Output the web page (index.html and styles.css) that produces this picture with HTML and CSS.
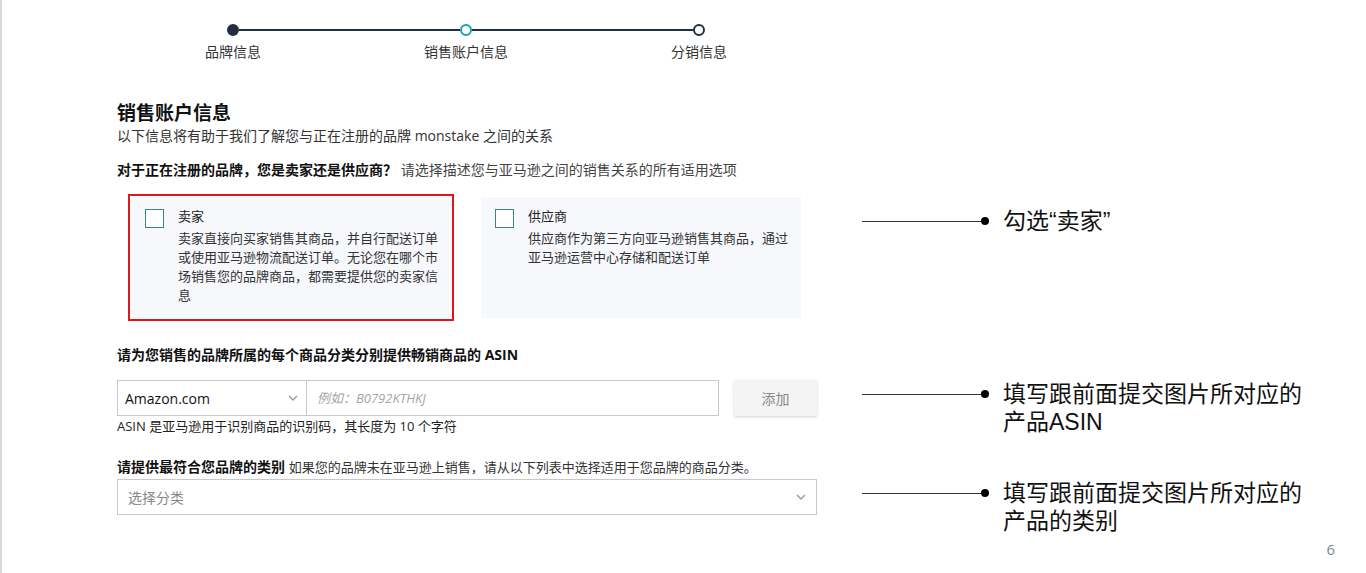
FILE: index.html
```html
<!DOCTYPE html>
<html lang="zh-CN">
<head>
    <meta charset="UTF-8">
    <meta name="viewport" content="width=device-width, initial-scale=1.0">
    <title>销售账户信息</title>
    <link rel="stylesheet" href="styles.css">
</head>
<body>
    <div class="page">
        <div class="steps">
            <span class="dot done"></span>
            <span class="track"></span>
            <span class="dot current"></span>
            <span class="track"></span>
            <span class="dot"></span>
            <span class="step-label">品牌信息</span>
            <span class="step-label col-3">销售账户信息</span>
            <span class="step-label col-5">分销信息</span>
        </div>

        <h1>销售账户信息</h1>
        <p class="intro">以下信息将有助于我们了解您与正在注册的品牌 monstake 之间的关系</p>
        <p class="question"><b>对于正在注册的品牌，您是卖家还是供应商？</b> 请选择描述您与亚马逊之间的销售关系的所有适用选项</p>

        <div class="row cards-row">
            <div class="field cards">
                <div class="card selected">
                    <span class="checkbox"></span>
                    <div class="card-body">
                        <div class="card-title">卖家</div>
                        <div>卖家直接向买家销售其商品，并自行配送订单或使用亚马逊物流配送订单。无论您在哪个市场销售您的品牌商品，都需要提供您的卖家信息</div>
                    </div>
                </div>
                <div class="card">
                    <span class="checkbox"></span>
                    <div class="card-body">
                        <div class="card-title">供应商</div>
                        <div>供应商作为第三方向亚马逊销售其商品，通过亚马逊运营中心存储和配送订单</div>
                    </div>
                </div>
            </div>
            <div class="note note-cards">
                <span class="note-mark"><span class="note-line"></span><span class="note-dot"></span></span>
                <span class="note-text">勾选“卖家”</span>
            </div>
        </div>

        <p class="label asin-label"><b>请为您销售的品牌所属的每个商品分类分别提供畅销商品的 ASIN</b></p>

        <div class="row asin-block">
            <div class="field">
                <div class="asin-row">
                    <div class="select">
                        <span>Amazon.com</span>
                        <svg class="chevron" width="10" height="6" viewBox="0 0 10 6"><path d="M1 1l4 4 4-4" fill="none" stroke="#9a9a9a" stroke-width="1.4"/></svg>
                    </div>
                    <input class="asin-input" type="text" placeholder="例如：B0792KTHKJ">
                    <button class="btn-add">添加</button>
                </div>
                <p class="help">ASIN 是亚马逊用于识别商品的识别码，其长度为 10 个字符</p>
            </div>
            <div class="note">
                <span class="note-mark"><span class="note-line"></span><span class="note-dot"></span></span>
                <span class="note-text">填写跟前面提交图片所对应的<br>产品ASIN</span>
            </div>
        </div>

        <p class="label category-label"><b>请提供最符合您品牌的类别</b> <span>如果您的品牌未在亚马逊上销售，请从以下列表中选择适用于您品牌的商品分类。</span></p>

        <div class="row category-block">
            <div class="field">
                <div class="select wide">
                    <span>选择分类</span>
                    <svg class="chevron" width="10" height="6" viewBox="0 0 10 6"><path d="M1 1l4 4 4-4" fill="none" stroke="#9a9a9a" stroke-width="1.4"/></svg>
                </div>
            </div>
            <div class="note">
                <span class="note-mark"><span class="note-line"></span><span class="note-dot"></span></span>
                <span class="note-text">填写跟前面提交图片所对应的<br>产品的类别</span>
            </div>
        </div>

        <div class="page-number">6</div>
    </div>
</body>
</html>
```

FILE: styles.css
```css
body {
    margin: 0;
    font-family: "Open Sans", "Noto Sans CJK SC", sans-serif;
    color: #333;
    background: #fff;
}
p {
    margin: 0;
}
.page {
    min-height: 573px;
    box-sizing: border-box;
    border-left: 2px solid #d9d9d9;
    padding: 24px 0 0 115px;
    display: flex;
    flex-direction: column;
}

/* stepper */
.steps {
    display: grid;
    grid-template-columns: 12px 1fr 12px 1fr 12px;
    row-gap: 6px;
    width: 478px;
    margin-left: 110px;
}
.dot {
    width: 12px;
    height: 12px;
    box-sizing: border-box;
    border-radius: 50%;
    border: 2px solid #232f3e;
    background: #fff;
}
.dot.done {
    background: #232f3e;
}
.dot.current {
    border-color: #13a3aa;
}
.track {
    height: 2px;
    align-self: center;
    background: #232f3e;
}
.step-label {
    grid-row: 2;
    grid-column: 1;
    display: flex;
    justify-content: center;
    white-space: nowrap;
    font-size: 14px;
    line-height: 20px;
    color: #333;
}
.step-label.col-3 {
    grid-column: 3;
}
.step-label.col-5 {
    grid-column: 5;
}

h1 {
    margin: 38px 0 0;
    font-size: 19px;
    line-height: 26px;
    font-weight: 700;
    color: #111;
}
.intro {
    font-size: 14px;
    line-height: 20px;
    color: #333;
}
.question {
    margin-top: 14px;
    font-size: 14px;
    line-height: 20px;
    color: #444;
}
.question b,
.label b {
    color: #111;
    font-weight: 700;
}

/* form rows with notes on the right */
.row {
    display: flex;
    align-items: flex-start;
    gap: 45px;
}
.field {
    width: 700px;
    flex: none;
}

.cards-row {
    margin-top: 17px;
}
.cards {
    display: flex;
    gap: 30px;
    box-sizing: border-box;
    padding-left: 14px;
}
.card {
    width: 320px;
    height: 121px;
    box-sizing: border-box;
    background: #f7f8fc;
    padding: 10px 12px 10px 14px;
    display: flex;
    gap: 14px;
}
.card.selected {
    outline: 2px solid #e0161b;
    outline-offset: 1px;
}
.checkbox {
    flex: none;
    width: 19px;
    height: 19px;
    margin-top: 2px;
    box-sizing: border-box;
    border: 1px solid #3d8585;
    background: #fff;
}
.card-body {
    width: 267px;
    flex: none;
    font-size: 13px;
    line-height: 19px;
    color: #333;
}
.card-title {
    color: #222;
    margin-bottom: 3px;
}
.note-cards {
    margin-top: 10px;
}

.label {
    font-size: 14px;
    line-height: 20px;
}
.asin-label {
    margin-top: 27px;
}
.asin-block {
    margin-top: 15px;
}
.asin-row {
    display: flex;
    align-items: center;
}
.select {
    width: 190px;
    height: 36px;
    box-sizing: border-box;
    border: 1px solid #c8c8c8;
    background: #fff;
    display: flex;
    align-items: center;
    justify-content: space-between;
    padding: 0 8px 0 7px;
    font-size: 14px;
    color: #111;
}
.select.wide {
    width: 700px;
    padding-left: 10px;
    padding-right: 10px;
    color: #888;
}
.asin-input {
    width: 412px;
    height: 36px;
    box-sizing: border-box;
    border: 1px solid #c8c8c8;
    border-left: none;
    padding: 0 10px;
    font-family: inherit;
    font-size: 13px;
    font-style: italic;
    outline: none;
}
.asin-input::placeholder {
    color: #a5a5a5;
}
.btn-add {
    margin-left: 15px;
    width: 83px;
    height: 36px;
    border: none;
    border-radius: 2px;
    background: #f4f4f4;
    box-shadow: 0 1px 3px rgba(0,0,0,0.18);
    font-family: inherit;
    font-size: 14px;
    color: #888;
}
.help {
    margin-top: 1px;
    font-size: 13px;
    line-height: 18px;
    color: #222;
}
.category-label {
    margin-top: 21px;
}
.category-label span {
    font-size: 13px;
    color: #333;
}
.category-block {
    margin-top: 2px;
}

/* annotations */
.note {
    display: flex;
    align-items: flex-start;
    font-family: "Liberation Sans", "Noto Sans CJK SC", sans-serif;
    font-size: 23px;
    line-height: 28px;
    color: #111;
}
.note-mark {
    flex: none;
    height: 28px;
    display: flex;
    align-items: center;
}
.note-line {
    width: 119px;
    height: 1px;
    background: #333;
}
.note-dot {
    width: 8px;
    height: 8px;
    border-radius: 50%;
    background: #000;
}
.note-text {
    margin-left: 14px;
}

.page-number {
    margin-top: auto;
    text-align: right;
    padding: 0 31px 14px 0;
    font-size: 15px;
    line-height: 20px;
    color: #7a8896;
}
```
